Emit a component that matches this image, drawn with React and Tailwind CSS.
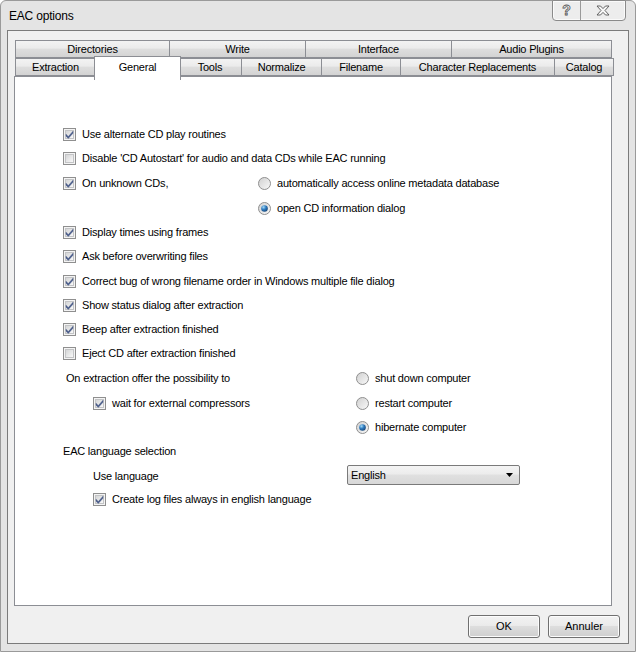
import { useState } from 'react';

const font = "font-['Liberation_Sans',Arial,sans-serif]";

const tabsTop = [
  { label: 'Directories', w: 'w-[155px]' },
  { label: 'Write', w: 'w-[136px]' },
  { label: 'Interface', w: 'w-[146px]' },
  { label: 'Audio Plugins', w: 'w-[160px]' },
];

const tabsBottom = [
  { label: 'Extraction', w: 'w-[81px]' },
  { label: 'General', w: 'w-[81px]' },
  { label: 'Tools', w: 'w-[63px]' },
  { label: 'Normalize', w: 'w-[80px]' },
  { label: 'Filename', w: 'w-[79px]' },
  { label: 'Character Replacements', w: 'w-[154px]' },
  { label: 'Catalog', w: 'w-[59px]' },
];

const tabBg =
  'bg-[linear-gradient(#f3f3f3,#ebebeb_45%,#dedede_50%,#d3d3d3)] border border-l-0 first:border-l border-[#8c8e94]';

const CheckBox = ({ checked }) => (
  <svg width="13" height="13" viewBox="0 0 13 13" className="shrink-0">
    <defs>
      <linearGradient id="cbFill" x1="0" y1="0" x2="1" y2="1">
        <stop offset="0" stopColor="#d2d3d4" />
        <stop offset="1" stopColor="#fbfbfb" />
      </linearGradient>
    </defs>
    <rect x="0.5" y="0.5" width="12" height="12" fill="#f4f4f4" stroke="#8f8f8f" />
    <rect x="2.5" y="2.5" width="8" height="8" fill="url(#cbFill)" stroke="#c3c4c6" />
    {checked && (
      <path
        d="M3 6.2 L5.3 8.6 L10 3.2 L10 5.2 L5.3 10.4 L3 8.2 Z"
        fill="#4c5f8e"
        stroke="#3a4d7a"
        strokeWidth="0.4"
      />
    )}
  </svg>
);

const Radio = ({ checked }) => (
  <svg width="13" height="13" viewBox="0 0 13 13" className="shrink-0">
    <defs>
      <linearGradient id="rdFill" x1="0" y1="0" x2="1" y2="1">
        <stop offset="0" stopColor="#cfcfcf" />
        <stop offset="1" stopColor="#fafafa" />
      </linearGradient>
      <radialGradient id="rdDot" cx="0.35" cy="0.3" r="0.8">
        <stop offset="0" stopColor="#a6dcf7" />
        <stop offset="0.45" stopColor="#2f7cc0" />
        <stop offset="1" stopColor="#163f6e" />
      </radialGradient>
    </defs>
    <circle cx="6.5" cy="6.5" r="6" fill="url(#rdFill)" stroke="#8f8f8f" />
    {checked && <circle cx="6.5" cy="6.5" r="3.3" fill="url(#rdDot)" />}
  </svg>
);

const Label = ({ children }) => (
  <span className="text-[11px] tracking-[-0.2px] text-black whitespace-nowrap">{children}</span>
);

const CheckItem = ({ checked, children }) => (
  <div className="flex items-center gap-[6px]">
    <CheckBox checked={checked} />
    <Label>{children}</Label>
  </div>
);

const RadioItem = ({ checked, children }) => (
  <div className="flex items-center gap-[6px]">
    <Radio checked={checked} />
    <Label>{children}</Label>
  </div>
);

const GeneralPage = () => (
  <div className="flex flex-col pt-[45px] pl-[48px]">
    <div className="h-[24px] flex items-center">
      <CheckItem checked>Use alternate CD play routines</CheckItem>
    </div>
    <div className="h-[25px] flex items-center">
      <CheckItem>Disable 'CD Autostart' for audio and data CDs while EAC running</CheckItem>
    </div>
    <div className="h-[25px] flex items-center">
      <div className="w-[195px]">
        <CheckItem checked>On unknown CDs,</CheckItem>
      </div>
      <RadioItem>automatically access online metadata database</RadioItem>
    </div>
    <div className="h-[24px] flex items-center pl-[195px]">
      <RadioItem checked>open CD information dialog</RadioItem>
    </div>
    <div className="h-[24px] flex items-center">
      <CheckItem checked>Display times using frames</CheckItem>
    </div>
    <div className="h-[25px] flex items-center">
      <CheckItem checked>Ask before overwriting files</CheckItem>
    </div>
    <div className="h-[24px] flex items-center">
      <CheckItem checked>Correct bug of wrong filename order in Windows multiple file dialog</CheckItem>
    </div>
    <div className="h-[24px] flex items-center">
      <CheckItem checked>Show status dialog after extraction</CheckItem>
    </div>
    <div className="h-[24px] flex items-center">
      <CheckItem checked>Beep after extraction finished</CheckItem>
    </div>
    <div className="h-[25px] flex items-center">
      <CheckItem>Eject CD after extraction finished</CheckItem>
    </div>

    {/* shutdown options */}
    <div className="h-[25px] flex items-center">
      <div className="w-[293px] pl-[3px] -mt-[3px]">
        <Label>On extraction offer the possibility to</Label>
      </div>
      <RadioItem>shut down computer</RadioItem>
    </div>
    <div className="h-[24px] flex items-center">
      <div className="w-[293px] pl-[30px]">
        <CheckItem checked>wait for external compressors</CheckItem>
      </div>
      <RadioItem>restart computer</RadioItem>
    </div>
    <div className="h-[24px] flex items-center pl-[293px]">
      <RadioItem checked>hibernate computer</RadioItem>
    </div>

    {/* language */}
    <div className="h-[24px] flex items-center">
      <Label>EAC language selection</Label>
    </div>
    <div className="h-[24px] flex items-center">
      <div className="w-[284px] pl-[30px]">
        <Label>Use language</Label>
      </div>
      <div className="w-[173px] h-[20px] flex items-center justify-between rounded-[2px] border border-[#7a7a7a] bg-[linear-gradient(#f4f4f4,#ececec_45%,#e0e0e0_50%,#d8d8d8)] pl-[3px] pr-[6px]">
        <Label>English</Label>
        <svg width="7" height="4" viewBox="0 0 7 4">
          <path d="M0 0 H7 L3.5 4 Z" fill="#000" />
        </svg>
      </div>
    </div>
    <div className="h-[24px] flex items-center pl-[30px]">
      <CheckItem checked>Create log files always in english language</CheckItem>
    </div>
  </div>
);

const Button = ({ children }) => (
  <button className="w-[72px] h-[23px] rounded-[3px] border border-[#707070] bg-[linear-gradient(#f2f2f2,#ebebeb_45%,#dddddd_50%,#cfcfcf)] text-[11px] text-black shadow-[inset_0_0_0_1px_#fcfcfc]">
    {children}
  </button>
);

export default function App() {
  const [active] = useState('General');

  return (
    <div className={`w-[636px] h-[652px] flex flex-col bg-[#e4e4e4] rounded-t-[6px] border border-[#9a9a9a] ${font}`}>
      <div className="h-[29px] flex justify-between items-start">
        <span className="pl-[8px] pt-[6px] text-[12px] tracking-[-0.2px] text-black">EAC options</span>
        <div className="flex h-[21px] mr-[9px] -mt-[1px] rounded-b-[4px] border border-[#8a8a8a] bg-[#ededed] shadow-[inset_0_0_0_1px_#fafafa]">
          <div className="w-[28px] flex items-center justify-center border-r border-[#9a9a9a] text-[14px] font-bold text-[#f6f6f6] [-webkit-text-stroke:0.8px_#555]">
            ?
          </div>
          <div className="w-[44px] flex items-center justify-center">
            <svg width="14" height="11" viewBox="0 0 14 11">
              <path
                d="M1 1 H4.5 L7 3.6 L9.5 1 H13 L9 5.5 L13 10 H9.5 L7 7.4 L4.5 10 H1 L5 5.5 Z"
                fill="#f8f8f8"
                stroke="#555"
                strokeWidth="0.9"
              />
            </svg>
          </div>
        </div>
      </div>

      <div className="flex-1 mx-[6px] mb-[7px] border border-[#7b7b7b] bg-[#f0f0f0] flex flex-col pt-[9px] pl-[6px]">
        {/* tab headers */}
        <div className="flex ml-[1px] h-[18px]">
          {tabsTop.map((t) => (
            <div
              key={t.label}
              className={`${t.w} ${tabBg} flex items-center justify-center text-[11px] tracking-[-0.2px] text-black`}
            >
              {t.label}
            </div>
          ))}
        </div>
        <div className="flex ml-[1px] h-[18px] relative z-10">
          {tabsBottom.map((t) =>
            t.label === active ? (
              <div
                key={t.label}
                className={`${t.w} -mx-[2px] px-[2px] box-content h-[21px] -mt-[2px] bg-white border border-b-0 border-[#8c8e94] flex items-start justify-center pt-[2px] text-[11px] tracking-[-0.2px] text-black relative z-20`}
              >
                {t.label}
              </div>
            ) : (
              <div
                key={t.label}
                className={`${t.w} ${tabBg} flex items-center justify-center text-[11px] tracking-[-0.2px] text-black`}
              >
                {t.label}
              </div>
            )
          )}
        </div>

        {/* tab page */}
        <div className="w-[598px] h-[530px] bg-white border border-[#8c8e94]">
          <GeneralPage />
        </div>

        <div className="flex justify-end gap-[8px] pr-[8px] mt-[9px]">
          <Button>OK</Button>
          <Button>Annuler</Button>
        </div>
      </div>
    </div>
  );
}
